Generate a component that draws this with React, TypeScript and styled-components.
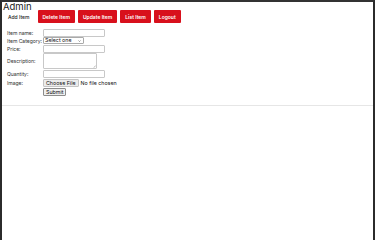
import styled, { createGlobalStyle } from 'styled-components';

const GlobalStyle = createGlobalStyle`
  html, body {
    margin: 0;
    padding: 0;
    background: #fff;
  }
  * {
    box-sizing: border-box;
  }
`;

const Page = styled.div`
  height: 100vh;
  border-top: 2px solid #333;
  border-left: 2px solid #2b2b2b;
  border-right: 2px solid #2b2b2b;
  font-family: Inter, 'Liberation Sans', sans-serif;
  color: #222;
  overflow: hidden;
`;

const Title = styled.h1`
  margin: 0;
  padding-left: 1px;
  font-size: 9.5px;
  line-height: 10px;
  font-weight: 400;
  color: #1a1a1a;
`;

const Nav = styled.nav`
  display: flex;
  gap: 3px;
  padding-left: 1px;
  margin-top: -2px;
`;

const Tab = styled.button<{ $active?: boolean }>`
  height: 13px;
  padding: 0 5px;
  border: none;
  border-radius: 1px;
  font-family: inherit;
  font-size: 5px;
  font-weight: ${({ $active }) => ($active ? 500 : 600)};
  background: ${({ $active }) => ($active ? '#fff' : '#d8101c')};
  color: ${({ $active }) => ($active ? '#222' : '#fff')};
  cursor: pointer;
`;

const Form = styled.form`
  display: grid;
  grid-template-columns: 36px max-content;
  align-items: center;
  padding: 5px 0 9px 5px;
  border-bottom: 1px solid #e6e6e6;
`;

const Label = styled.label`
  color: #333;
  white-space: nowrap;
  font-size: 5.1px;
  letter-spacing: -0.05px;
`;

const Field = styled.div<{ $h: number }>`
  display: flex;
  align-items: center;
  height: ${({ $h }) => $h}px;
`;

const TextInput = styled.input`
  width: 62px;
  height: 8px;
  border: 1px solid #c8c8c8;
  border-radius: 1px;
  padding: 0;
  font-size: 5px;
`;

const Select = styled.div`
  width: 41px;
  height: 7px;
  border: 1px solid #aaa;
  border-radius: 1px;
  display: flex;
  align-items: center;
  justify-content: space-between;
  padding: 0 2px 0 1px;
  font-size: 5.3px;
  line-height: 1;
  color: #111;
`;

const Chevron = styled.svg`
  width: 3px;
  height: 2px;
`;

const TextArea = styled.div`
  position: relative;
  width: 54px;
  height: 16px;
  border: 1px solid #c8c8c8;
  border-radius: 1px;
`;

const Grip = styled.svg`
  position: absolute;
  right: 0;
  bottom: 0;
  width: 3px;
  height: 3px;
`;

const GrayButton = styled.span`
  display: inline-flex;
  align-items: center;
  height: 8px;
  padding: 0 2px;
  border: 1px solid #8c8c8c;
  border-radius: 1px;
  background: #efefef;
  font-size: 5.3px;
  color: #111;
`;

const FileButton = styled(GrayButton)`
  border-color: #c4c4c4;
  background: #ececec;
`;

const FileText = styled.span`
  margin-left: 2px;
  font-size: 5.3px;
  color: #111;
`;

const Empty = styled.span``;

export default function App() {
  return (
    <>
      <GlobalStyle />
      <Page>
        <Title>Admin</Title>
        <Nav>
          <Tab $active>Add Item</Tab>
          <Tab>Delete Item</Tab>
          <Tab>Update Item</Tab>
          <Tab>List Item</Tab>
          <Tab>Logout</Tab>
        </Nav>
        <Form>
          <Label>Item name:</Label>
          <Field $h={9}>
            <TextInput />
          </Field>
          <Label>Item Category:</Label>
          <Field $h={7}>
            <Select>
              <span>Select one</span>
              <Chevron viewBox="0 0 6 4">
                <path d="M1 1 L3 3 L5 1" stroke="#333" strokeWidth="1" fill="none" />
              </Chevron>
            </Select>
          </Field>
          <Label>Price:</Label>
          <Field $h={9}>
            <TextInput />
          </Field>
          <Label>Description:</Label>
          <Field $h={16}>
            <TextArea>
              <Grip viewBox="0 0 6 6">
                <path d="M5 1 L1 5 M5 3 L3 5" stroke="#888" strokeWidth="0.8" />
              </Grip>
            </TextArea>
          </Field>
          <Label>Quantity:</Label>
          <Field $h={9}>
            <TextInput />
          </Field>
          <Label>Image:</Label>
          <Field $h={9}>
            <FileButton>Choose File</FileButton>
            <FileText>No file chosen</FileText>
          </Field>
          <Empty />
          <Field $h={9}>
            <GrayButton>Submit</GrayButton>
          </Field>
        </Form>
      </Page>
    </>
  );
}
